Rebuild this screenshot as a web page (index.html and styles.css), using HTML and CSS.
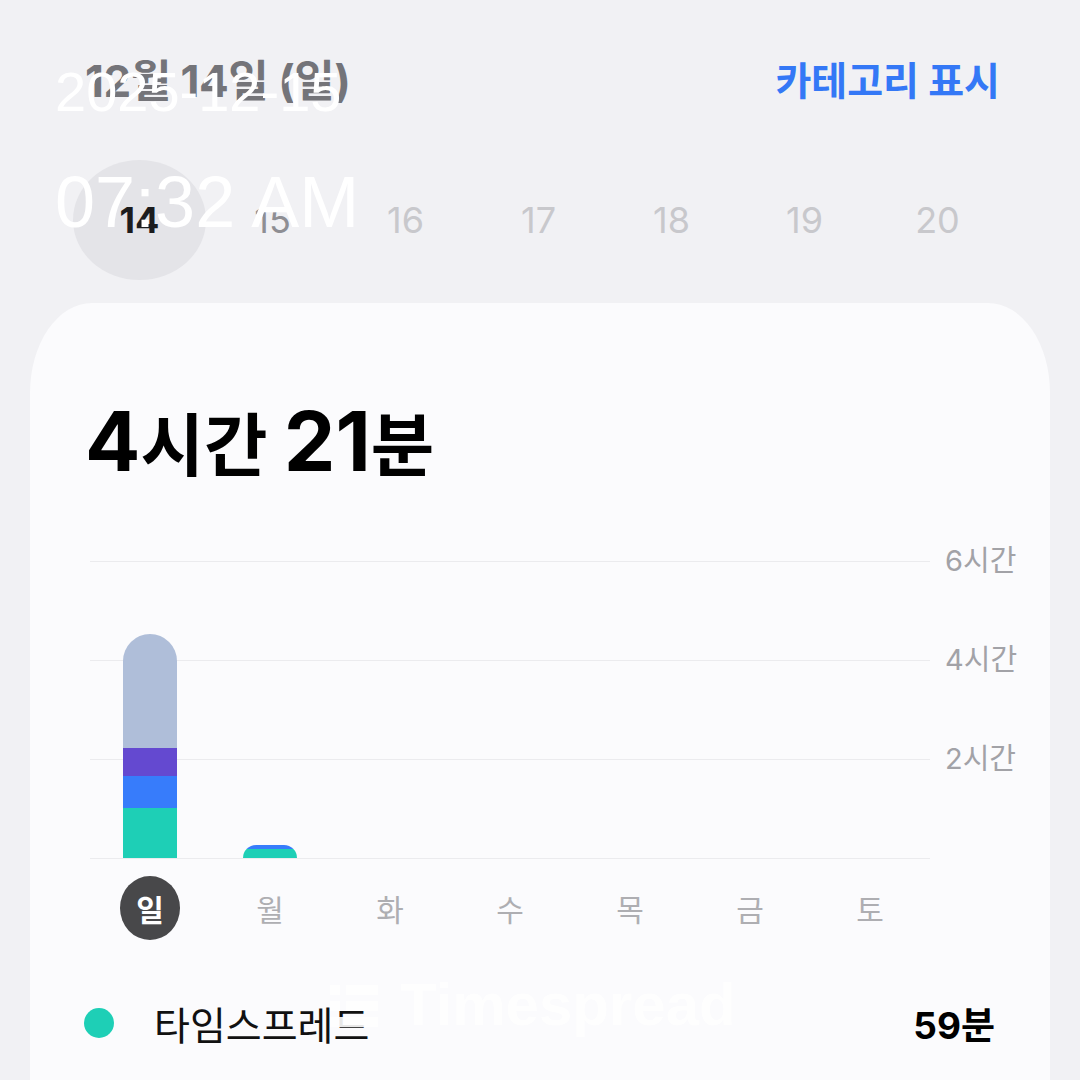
FILE: index.html
```html
<!DOCTYPE html>
<html lang="ko">
<head>
  <meta charset="UTF-8" />
  <title>스크린 타임</title>
  <meta name="viewport" content="width=device-width, initial-scale=1.0" />
  <link rel="stylesheet" href="styles.css">
</head>
<body>
  <header class="top-bar">
    <h1 class="date-title">12월 14일 (일)</h1>
    <a class="category-link" href="#">카테고리 표시</a>
  </header>

  <nav class="day-strip">
    <div class="day selected">14</div>
    <div class="day near">15</div>
    <div class="day">16</div>
    <div class="day">17</div>
    <div class="day">18</div>
    <div class="day">19</div>
    <div class="day">20</div>
  </nav>

  <main class="card">
    <h2 class="total"><span class="num">4</span>시간 <span class="num">21</span>분</h2>

    <div class="chart">
      <div class="plot">
        <div class="col">
          <div class="bar" style="height: 224px;">
            <div class="seg other" style="height: 114px;"></div>
            <div class="seg purple" style="height: 28px;"></div>
            <div class="seg blue" style="height: 32px;"></div>
            <div class="seg teal" style="height: 50px;"></div>
          </div>
        </div>
        <div class="col">
          <div class="bar" style="height: 13px;">
            <div class="seg blue" style="height: 4px;"></div>
            <div class="seg teal" style="height: 9px;"></div>
          </div>
        </div>
        <div class="col"></div>
        <div class="col"></div>
        <div class="col"></div>
        <div class="col"></div>
        <div class="col"></div>
      </div>
      <div class="axis">
        <span>6시간</span>
        <span>4시간</span>
        <span>2시간</span>
      </div>
    </div>

    <div class="weekdays">
      <span class="wd active">일</span>
      <span class="wd">월</span>
      <span class="wd">화</span>
      <span class="wd">수</span>
      <span class="wd">목</span>
      <span class="wd">금</span>
      <span class="wd">토</span>
    </div>

    <div class="legend-row">
      <span class="dot"></span>
      <span class="app-name">타임스프레드</span>
      <span class="app-time">59분</span>
    </div>
  </main>

  <!-- capture overlay -->
  <div class="stamp">
    <div class="stamp-date">2025-12-15</div>
    <div class="stamp-time">07:32 AM</div>
  </div>
  <div class="watermark">
    <svg width="48" height="44" viewBox="0 0 48 44">
      <rect x="0" y="2" width="10" height="10" fill="#ffffff" />
      <rect x="16" y="2" width="32" height="10" fill="#ffffff" />
      <rect x="0" y="18" width="10" height="10" fill="#ffffff" />
      <rect x="16" y="18" width="32" height="10" fill="#ffffff" />
      <rect x="0" y="34" width="48" height="10" fill="#ffffff" />
    </svg>
    <span>Timespread</span>
  </div>
</body>
</html>
```

FILE: styles.css
```css
body {
  font-family: Inter, "Noto Sans CJK KR", sans-serif;
  background-color: #f1f1f4;
  color: #000000;
  margin: 0;
  padding: 0;
  height: 1080px;
  overflow: hidden;
  position: relative;
}
.top-bar {
  display: flex;
  justify-content: space-between;
  align-items: center;
  padding: 50px 80px 0 85px;
  height: 56px;
}
.date-title {
  margin: 0;
  font-size: 44px;
  font-weight: 700;
  color: #747479;
  letter-spacing: -0.5px;
}
.category-link {
  font-size: 39px;
  font-weight: 700;
  color: #3478f6;
  text-decoration: none;
}
.day-strip {
  display: flex;
  padding: 54px 0 0 73px;
}
.day {
  width: 133px;
  height: 120px;
  display: flex;
  align-items: center;
  justify-content: center;
  font-size: 36px;
  color: #c8c8cc;
}
.day.selected {
  background-color: #e4e4e8;
  border-radius: 50%;
  color: #1c1c1e;
  font-weight: 700;
}
.day.near {
  color: #8e8e93;
}
.card {
  margin: 23px 30px 0;
  background-color: #fbfbfd;
  border-radius: 62px 62px 0 0 / 90px 90px 0 0;
  padding: 94px 0 0 60px;
  height: 700px;
}
.total {
  margin: 0 0 0 -5px;
  font-size: 69px;
  font-weight: 700;
  line-height: 90px;
}
.total .num {
  font-size: 82px;
}
.chart {
  display: flex;
  margin-top: 70px;
}
.plot {
  display: flex;
  align-items: flex-end;
  width: 840px;
  height: 298px;
  background: repeating-linear-gradient(to bottom, #ebebee 0 1px, transparent 1px 99px);
}
.col {
  width: 120px;
  display: flex;
  justify-content: center;
}
.bar {
  width: 54px;
  display: flex;
  flex-direction: column;
  border-radius: 27px 27px 0 0;
  overflow: hidden;
  margin-bottom: 1px;
}
.seg {
  flex-shrink: 0;
}
.seg.other { background-color: #afbed9; flex-grow: 1; }
.seg.purple { background-color: #6449d0; }
.seg.blue { background-color: #377cfb; }
.seg.teal { background-color: #1ecfb6; }
.axis {
  display: flex;
  flex-direction: column;
  gap: 69px;
  margin: -15px 0 0 15px;
  font-size: 29px;
  line-height: 30px;
  color: #a2a2a7;
}
.weekdays {
  display: flex;
  margin-top: 17px;
}
.wd {
  width: 120px;
  height: 64px;
  display: flex;
  align-items: center;
  justify-content: center;
  font-size: 30px;
  color: #aeaeb2;
}
.wd.active {
  width: 60px;
  margin: 0 30px;
  background-color: #48484a;
  color: #ffffff;
  font-weight: 700;
  border-radius: 50%;
}
.legend-row {
  display: flex;
  align-items: center;
  margin: 48px 0 0 -6px;
  padding-right: 55px;
  height: 70px;
}
.dot {
  width: 30px;
  height: 30px;
  border-radius: 50%;
  background-color: #1ecfb6;
}
.app-name {
  margin-left: 40px;
  font-size: 39px;
  color: #111111;
  flex-grow: 1;
}
.app-time {
  font-size: 37px;
  font-weight: 700;
}
.stamp {
  position: absolute;
  left: 55px;
  top: 62px;
  color: #ffffff;
  font-family: "Liberation Sans", Arial, sans-serif;
}
.stamp-date {
  font-size: 56px;
  line-height: 60px;
}
.stamp-time {
  margin-top: 40px;
  font-size: 72px;
  line-height: 80px;
}
.watermark {
  position: absolute;
  left: 330px;
  top: 970px;
  display: flex;
  align-items: center;
  gap: 22px;
  color: #ffffff;
  font-family: "Liberation Sans", Arial, sans-serif;
  font-weight: 700;
  font-size: 60px;
  opacity: 0.9;
}
```
